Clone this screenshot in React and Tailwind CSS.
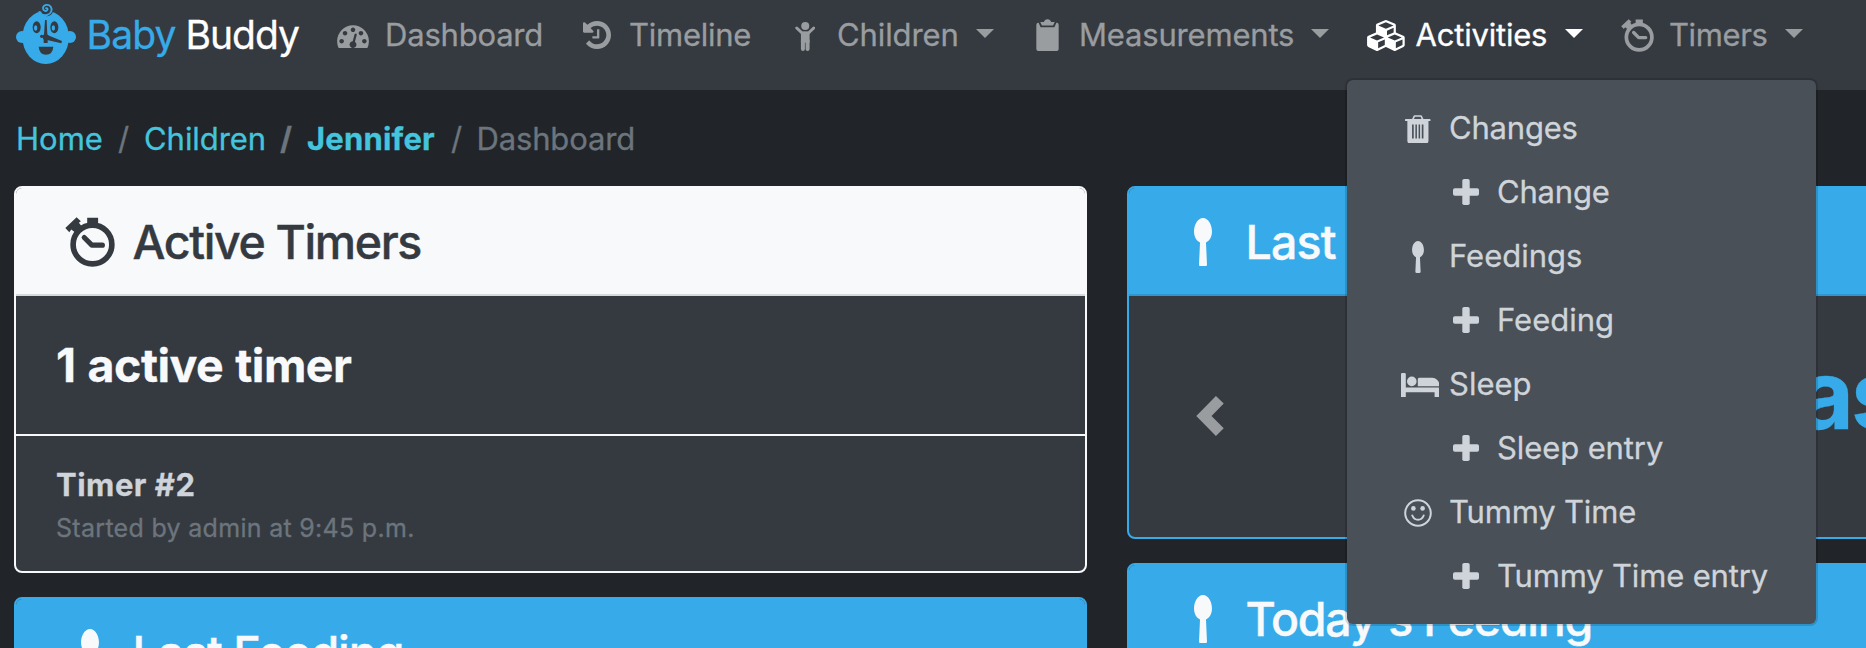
import React from "react";

const BabyLogo = () => (
  <svg viewBox="15 9 186 186" className="h-[62px] w-[62px] shrink-0" fill="#37abe9">
    <ellipse cx="107" cy="112" rx="70" ry="80" />
    <circle cx="36" cy="111" r="18" />
    <circle cx="180" cy="111" r="18" />
    <circle cx="111" cy="31" r="18" fill="#353a41" />
    <path d="M88 36Q97 48 111 45C124 42 128 28 122 20C115 11 101 14 99 23C98 32 108 36 112 30C114 26 111 23 108 25" fill="none" stroke="#37abe9" strokeWidth="5.5" strokeLinecap="round" />
    <g fill="#353a41">
      <ellipse cx="80" cy="82" rx="12" ry="18" />
      <ellipse cx="133" cy="82" rx="12" ry="18" />
      <path d="M105 60h5l2 44-10 0zM114 106l42 17-2 7-43-10z" />
      <circle cx="107" cy="111" r="9" />
      <circle cx="95" cy="109" r="5" />
      <rect x="101" y="111" width="12" height="18" />
      <path d="M86 140h44q-2 24-22 24t-22-24z" />
    </g>
    <ellipse cx="77" cy="84" rx="5" ry="8" />
    <ellipse cx="130" cy="84" rx="5" ry="8" />
  </svg>
);

const Gauge = () => (
  <svg viewBox="0 128 1792 1408" className="h-[25px] w-[32px]" fill="currentColor">
    <path d="M384 1152q0-53-37.500-90.500t-90.500-37.500-90.500 37.500-37.500 90.500 37.500 90.500 90.500 37.500 90.500-37.500 37.500-90.500zm192-448q0-53-37.500-90.500t-90.500-37.500-90.500 37.500-37.500 90.500 37.500 90.500 90.500 37.500 90.500-37.500 37.500-90.500zm428 481l101-382q6-26-7.500-48.500t-38.500-29.500-48 6.500-30 39.500l-101 382q-60 5-107 43.500t-63 98.500q-20 77 20 146t117 89 146-20 89-117q16-60-6-117t-72-91zm660-33q0-53-37.500-90.500t-90.500-37.500-90.500 37.500-37.500 90.500 37.500 90.500 90.500 37.500 90.500-37.500 37.500-90.500zm-640-640q0-53-37.500-90.500t-90.500-37.500-90.500 37.500-37.500 90.500 37.500 90.500 90.500 37.500 90.500-37.500 37.500-90.500zm448 192q0-53-37.500-90.500t-90.500-37.500-90.500 37.500-37.500 90.500 37.500 90.500 90.500 37.500 90.500-37.500 37.500-90.500zm320 448q0 261-141 483-19 29-54 29h-1402q-35 0-54-29-141-221-141-483 0-182 71-348t191-286 286-191 348-71 348 71 286 191 191 286 71 348z" />
  </svg>
);

const History = () => (
  <svg viewBox="128 128 1536 1536" className="h-[28px] w-[28px]" fill="currentColor">
    <path d="M1664 896q0 156-61 298t-164 245-245 164-298 61q-172 0-327-72.500t-264-204.500q-7-10-6.500-22.500t8.500-20.500l137-138q10-9 25-9 16 2 23 12 73 95 179 147t225 52q104 0 198.500-40.500t163.500-109.500 109.500-163.500 40.500-198.500-40.500-198.500-109.500-163.500-163.500-109.500-198.500-40.500q-98 0-188 35.500t-160 101.500l137 138q31 30 14 69-17 40-59 40h-448q-26 0-45-19t-19-45v-448q0-42 40-59 39-17 69 14l130 129q107-101 244.500-156.500t284.500-55.500q156 0 298 61t245 164 164 245 61 298zm-640-288v448q0 14-9 23t-23 9h-320q-14 0-23-9t-9-23v-64q0-14 9-23t23-9h224v-352q0-14 9-23t23-9h64q14 0 23 9t9 23z" />
  </svg>
);

const Child = () => (
  <svg viewBox="0 0 61 87" className="mt-[3px] h-[29px] w-[20.500px]" fill="currentColor">
    <circle cx="30.500" cy="12" r="12" />
    <path d="M5 18L21 33H40L56 18" fill="none" stroke="currentColor" strokeWidth="9" strokeLinecap="round" />
    <rect x="17.500" y="29" width="26" height="33" />
    <rect x="17.500" y="50" width="12" height="37" rx="6" />
    <rect x="31.500" y="50" width="12" height="37" rx="6" />
  </svg>
);

const Clipboard = () => (
  <svg viewBox="0 0 70 98" className="h-[32.500px] w-[23px]" fill="currentColor">
    <path d="M7 11H8L14 25H56L62 11H63Q69 11 69 18V91Q69 97 63 97H7Q1 97 1 91V18Q1 11 7 11Z" />
    <path d="M13 9H24Q26 0 35 0T46 9H57L52 19H18Z" />
  </svg>
);

const Cubes = () => (
  <svg viewBox="0 0 2304 1792" className="h-[31px] w-[40px]" fill="currentColor">
    <path d="M640 1632l384-192v-314l-384 164v342zm-64-454l404-173-404-173-404 173zm1088 454l384-192v-314l-384 164v342zm-64-454l404-173-404-173-404 173zm-448-293l384-165v-266l-384 164v267zm-64-379l441-189-441-189-441 189zm1088 518v416q0 36-19 67t-52 47l-448 224q-25 14-57 14t-57-14l-448-224q-4-2-7-4-2 2-7 4l-448 224q-25 14-57 14t-57-14l-448-224q-33-16-52-47t-19-67v-416q0-38 21.500-70t56.500-48l434-186v-400q0-38 21.500-70t56.500-48l448-192q23-10 50-10t50 10l448 192q35 16 56.500 48t21.500 70v400l434 186q36 16 57 48t21 70z" />
  </svg>
);

const Stopwatch = ({ className }) => (
  <svg viewBox="15 16 151 151" className={className} fill="currentColor">
    <circle cx="98" cy="99" r="58.500" fill="none" stroke="currentColor" strokeWidth="17" />
    <path d="M82 18H115V42H82ZM50 17L63 29L57 33L60 37L68 48L50 66L38 57L34 54L28 62L16 49Z" />
    <path d="M73 78L96 101H128" fill="none" stroke="currentColor" strokeWidth="15.500" strokeLinecap="round" strokeLinejoin="round" />
  </svg>
);

const Spoon = ({ className }) => (
  <svg viewBox="0 0 54 146" className={className} fill="currentColor">
    <path d="M27 0C43 0 54 20 54 41C54 59 45 70 36 74L39 140Q39 146 33 146H21Q15 146 15 140L18 74C9 70 0 59 0 41C0 20 11 0 27 0Z" />
  </svg>
);

const Trash = () => (
  <svg viewBox="15 10 76 85" className="h-[28.500px] w-[25.500px]">
    <path d="M38 24L43 13H63L68 24" fill="none" stroke="currentColor" strokeWidth="5" strokeLinejoin="round" />
    <path fill="currentColor" fillRule="evenodd" d="M17 22H89Q91 22 91 24V28H85V87Q85 95 77 95H29Q22 95 22 87V28H15V24Q15 22 17 22ZM36 38V80H41V38ZM46 38V80H50.500V38ZM55.500 38V80H60V38ZM65 38V80H70V38Z" />
  </svg>
);

const Plus = () => (
  <svg viewBox="0 0 26 26" className="h-[26px] w-[26px]" fill="currentColor">
    <rect x="9.300" y="0" width="7.400" height="26" rx="1.800" />
    <rect x="0" y="9.300" width="26" height="7.400" rx="1.800" />
  </svg>
);

const Bed = () => (
  <svg viewBox="0 256 2048 1280" className="ml-1 h-[24px] w-[38.400px] shrink-0" fill="currentColor">
    <path d="M256 1024h1728q26 0 45 19t19 45v448h-256v-256h-1536v256h-256v-1216q0-26 19-45t45-19h128q26 0 45 19t19 45v704zm576-320q0-106-75-181t-181-75-181 75-75 181 75 181 181 75 181-75 75-181zm1216 256v-64q0-159-112.500-271.500t-271.500-112.500h-704q-26 0-45 19t-19 45v384h1152z" />
  </svg>
);

const Smile = () => (
  <svg viewBox="0 0 28 28" className="h-[28px] w-[28px]" fill="currentColor">
    <circle cx="14" cy="14" r="12.800" fill="none" stroke="currentColor" strokeWidth="2" />
    <circle cx="9.400" cy="9.400" r="2.300" />
    <circle cx="18.600" cy="9.400" r="2.300" />
    <path d="M8.300 16.500Q10 20.800 14 20.800T19.700 16.500" fill="none" stroke="currentColor" strokeWidth="2" strokeLinecap="round" />
  </svg>
);

const Caret = () => (
  <svg viewBox="0 0 18 9" className="mb-[3px] ml-auto h-[9px] w-[18px] shrink-0" fill="currentColor">
    <path d="M0 0H18L9 9Z" />
  </svg>
);

const NavItem = ({ icon, label, track, width, inner, gap = "ml-3", color = "text-[#9a9da0]", caret = true, children }) => (
  <li className={`relative shrink-0 ${width} ${color}`}>
    <a className={`flex h-full items-center ${inner}`}>
      <span className="flex w-10 shrink-0 justify-center">{icon}</span>
      <span className={`${gap} ${track}`}>{label}</span>
      {caret && <Caret />}
    </a>
    {children}
  </li>
);

const MenuItem = ({ icon, label, track, child }) => (
  <li className={`flex h-16 items-center ${child ? "pl-[99px]" : "pl-[51px]"}`}>
    <span className={`flex w-10 shrink-0 justify-center ${child ? "" : "mt-[2px]"}`}>{icon}</span>
    <span className={`ml-[11px] ${track}`}>{label}</span>
  </li>
);

const ActivitiesMenu = () => (
  <ul className="absolute top-[78px] left-[-22px] z-10 h-[548px] w-[473px] rounded-lg border-2 border-black/15 bg-[#495057] bg-clip-padding py-4 text-[#ced4da]">
    <MenuItem icon={<Trash />} label="Changes" track="tracking-[-0.2px]" />
    <MenuItem child icon={<Plus />} label="Change" track="tracking-[-0.2px]" />
    <MenuItem icon={<Spoon className="h-[32px] w-[12px]" />} label="Feedings" track="tracking-[0px]" />
    <MenuItem child icon={<Plus />} label="Feeding" track="tracking-[0px]" />
    <MenuItem icon={<Bed />} label="Sleep" track="tracking-[0px]" />
    <MenuItem child icon={<Plus />} label="Sleep entry" track="tracking-[-0.1px]" />
    <MenuItem icon={<Smile />} label="Tummy Time" track="tracking-[-0.17px]" />
    <MenuItem child icon={<Plus />} label="Tummy Time entry" track="tracking-[-0.17px]" />
  </ul>
);

const Navbar = () => (
  <nav className="h-[90px] bg-[#353a41]">
    <ul className="flex h-[70px]">
      <li className="flex w-[333px] shrink-0 items-center pl-[15px]">
        <span className="mb-[2px]"><BabyLogo /></span>
        <span className="ml-[9.500px] w-[99px] text-[39px] tracking-[-0.84px] text-[#37abe9]">Baby</span>
        <span className="text-[39px] tracking-[-1px] text-white">Buddy</span>
      </li>
      <NavItem icon={<Gauge />} label="Dashboard" track="tracking-[-0.2px]" width="w-[244px]" caret={false} />
      <NavItem icon={<History />} label="Timeline" track="tracking-[-0.25px]" width="w-[208px]" caret={false} />
      <NavItem icon={<Child />} label="Children" track="tracking-[-0.1px]" width="w-[242px]" inner="pr-[33px]" />
      <NavItem icon={<Clipboard />} label="Measurements" track="tracking-[-0.18px]" width="w-[340px]" inner="pr-[38px]" />
      <NavItem icon={<Cubes />} label="Activities" track="tracking-[-0.2px]" width="w-[250px]" inner="pr-[34px]" gap="ml-[8.500px]" color="text-white">
        <ActivitiesMenu />
      </NavItem>
      <NavItem icon={<Stopwatch className="h-[33px] w-[33px]" />} label="Timers" track="tracking-[-0.4px]" width="w-[186px]" inner="" />
    </ul>
  </nav>
);

const CardHeader = ({ icon, title, track, light }) => (
  <div className={`flex h-[108px] items-center border-b-2 pt-px pl-[49px] text-[46.500px] font-medium [-webkit-text-stroke:0.4px] ${light ? "border-[#d6d8dc] bg-[#f8f9fb] text-[#353a41]" : "border-[#3296cc] bg-[#37abe9] text-[#f8f9fb]"}`}>
    <span className="mt-px flex w-[50px] shrink-0 justify-center">{icon}</span>
    <span className={`ml-[17.500px] ${track}`}>{title}</span>
  </div>
);

export default function App() {
  return (
    <div className="h-[648px] w-[1866px] overflow-hidden bg-[#212529] font-[Inter,sans-serif] text-[31px] leading-[48px] whitespace-nowrap [-webkit-text-stroke:0.3px]">
      <Navbar />
      <ol className="flex h-24 items-center pt-px pl-4 text-[#44c4dd]">
        <li className="w-[102px] tracking-[0px]">Home</li>
        <li className="w-[26px] text-[#6c757d]">/</li>
        <li className="w-[136px] tracking-[-0.05px]">Children</li>
        <li className="w-[27px] font-bold text-[#6c757d]">/</li>
        <li className="w-[144px] font-bold tracking-[0.2px]">Jennifer</li>
        <li className="w-[25.500px] text-[#6c757d]">/</li>
        <li className="tracking-[-0.15px] text-[#6c757d]">Dashboard</li>
      </ol>
      <main className="flex gap-10 pl-[14px]">
        <div className="flex w-[1073px] shrink-0 flex-col gap-6">
          <section className="h-[387px] overflow-hidden rounded-lg border-2 border-[#f8f9fb] bg-[#353a41]">
            <CardHeader light icon={<Stopwatch className="h-[50px] w-[50px]" />} title="Active Timers" track="tracking-[-1.37px]" />
            <div className="flex h-[140px] items-center border-b-2 border-[#f8f9fb] pl-10">
              <h2 className="text-[46.500px] font-bold tracking-[-0.5px] text-[#f8f9fb] [word-spacing:1.500px]">1 active timer</h2>
            </div>
            <div className="pt-6 pl-10">
              <div className="leading-[49px] font-bold tracking-[0.5px] text-[#ced4da]">Timer #2</div>
              <div className="text-[25px] leading-[38px] tracking-[0.3px] text-[#6c757d]">Started by admin at 9:45 p.m.</div>
            </div>
          </section>
          <section className="h-[353px] overflow-hidden rounded-lg border-2 border-[#37abe9] bg-[#353a41]">
            <CardHeader icon={<Spoon className="h-[48.500px] w-[18px]" />} title="Last Feeding" track="tracking-[-1.05px]" />
          </section>
        </div>
        <div className="flex w-[1073px] shrink-0 flex-col gap-6">
          <section className="h-[353px] overflow-hidden rounded-lg border-2 border-[#37abe9] bg-[#353a41]">
            <CardHeader icon={<Spoon className="h-[48.500px] w-[18px]" />} title="Last Feeding" track="tracking-[-0.85px]" />
            <div className="flex h-[241px] items-center pl-[67px]">
              <svg viewBox="470 679 81 118" className="mb-[2px] h-[40px] w-[28px]" fill="#9a9da0">
                <path d="M470 738L528 679L551 701L515 738L551 774L528 797Z" />
              </svg>
              <span className="mb-[45px] ml-[523px] text-[96px] leading-[96px] font-bold tracking-[-3px] text-[#37abe9]">Last</span>
            </div>
          </section>
          <section className="h-[353px] overflow-hidden rounded-lg border-2 border-[#37abe9] bg-[#353a41]">
            <CardHeader icon={<Spoon className="h-[48.500px] w-[18px]" />} title="Today&#39;s Feeding" track="tracking-[-1.26px]" />
          </section>
        </div>
      </main>
    </div>
  );
}
